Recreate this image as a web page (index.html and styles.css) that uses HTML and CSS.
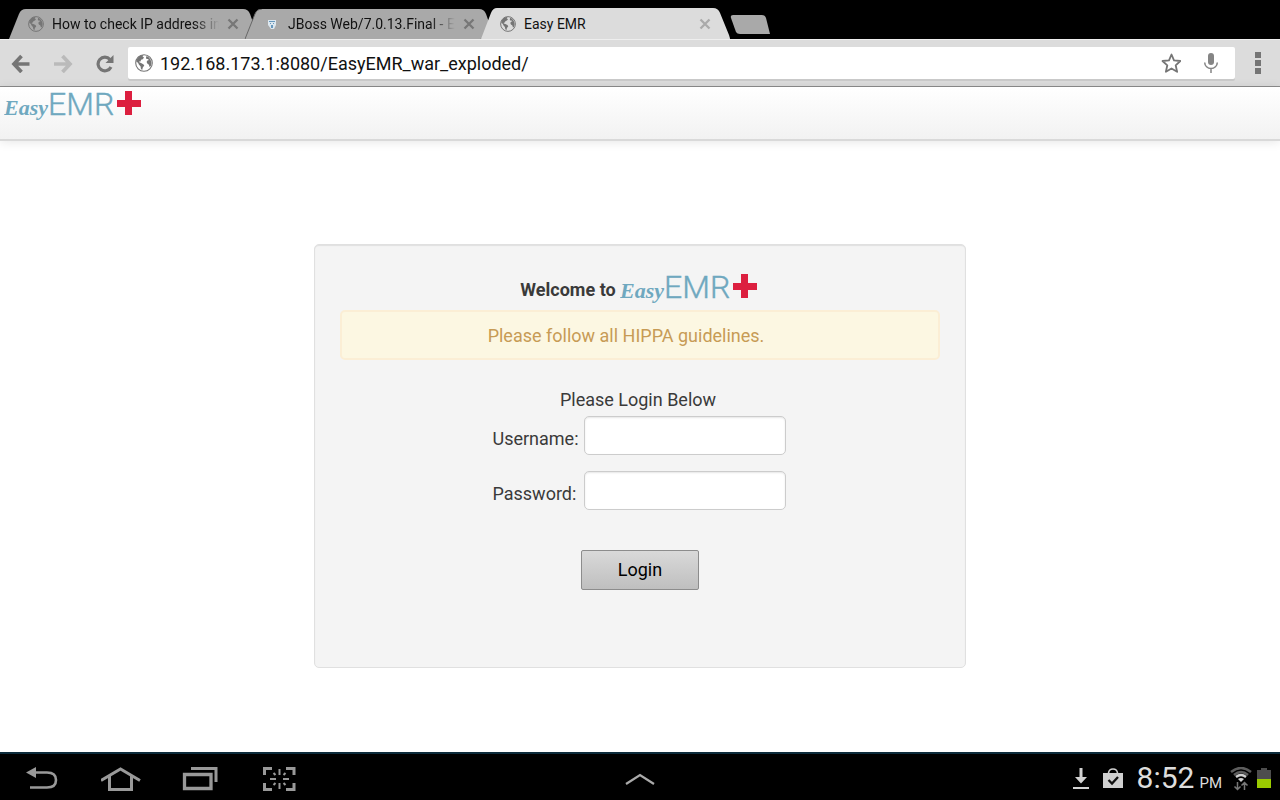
FILE: index.html
```html
<!DOCTYPE html>
<html lang="en">
<head>
<meta charset="utf-8">
<meta name="viewport" content="width=device-width, initial-scale=1">
<title>Easy EMR</title>
<link rel="stylesheet" href="styles.css">
</head>
<body>
<svg class="defs" aria-hidden="true">
  <symbol id="globe" viewBox="0 0 18 18">
    <circle cx="9" cy="9" r="8.300" fill="none" stroke="currentColor" stroke-width="1.100"/>
    <path fill="currentColor" d="M1.500 6 4 2.300 7 1 8.500 1.500 7.500 2.600 9 3.600 7.800 5.200 6 5.800 5.600 7.400 4.500 7.200 4.200 8.300 6 9 8.300 10.200 9.300 11.600 7.800 13.500 7.200 16 6 15 5.500 12.300 4 10.800 3 8.800 1.500 7.800z"/>
    <path fill="currentColor" d="M11.500 2 13.500 3 15.500 5.500 16.500 9 15.800 12 14.600 13 13.900 10.800 12.300 9.600 11.600 8 12.400 6.500 14 6 12.800 5 11.400 5.100 11 3.600z"/>
  </symbol>
  <symbol id="cross" viewBox="0 0 12 12">
    <path d="M1.500 1.500 10.500 10.500M10.500 1.500 1.500 10.500" stroke="currentColor" stroke-width="2.300" fill="none"/>
  </symbol>
  <symbol id="logo" viewBox="0 0 140 38">
    <text class="logo-script" x="0" y="27">Easy</text>
    <text class="logo-sans" x="44" y="27">EMR</text>
    <path d="M121 3h7v9h9v7h-9v8h-7v-8h-8v-7h8z" fill="#dc1f3f"/>
  </symbol>
</svg>

<div class="tabs">
  <div class="tab">
    <svg class="tab-bg" viewBox="0 0 250 30" preserveAspectRatio="none"><path class="tab-fill" d="M0 30 10 5Q12 0 17 0H235Q240 0 242 5L248 22Q245 30 236 30z"/></svg>
    <svg class="favicon"><use href="#globe"/></svg>
    <span class="tab-title fade">How to check IP address in</span>
    <button class="close" aria-label="Close tab"><svg><use href="#cross"/></svg></button>
  </div>
  <div class="tab">
    <svg class="tab-bg" viewBox="0 0 250 30" preserveAspectRatio="none"><path class="tab-fill" d="M0 30 10 5Q12 0 17 0H235Q240 0 242 5L248 22Q245 30 236 30z"/><path class="tab-edge" d="M0 30 10 5Q12 0 17 0"/></svg>
    <svg class="favicon" viewBox="0 0 16 16"><path d="M4 4h8v5l-2 4H7L4 9z" fill="#dce7ef"/><path d="M5 5h6v1H5zM6 7h1v1H6zM9 7h1v1H9zM7 9h2v3H7z" fill="#6798bd"/></svg>
    <span class="tab-title fade">JBoss Web/7.0.13.Final - E</span>
    <button class="close" aria-label="Close tab"><svg><use href="#cross"/></svg></button>
  </div>
  <div class="tab active">
    <svg class="tab-bg" viewBox="0 0 250 31" preserveAspectRatio="none"><path class="tab-fill" d="M0 31 10 5Q12 0 16 0H233Q238 0 240 5L249 27Q250 30 250 31z"/></svg>
    <svg class="favicon"><use href="#globe"/></svg>
    <span class="tab-title">Easy EMR</span>
    <button class="close" aria-label="Close tab"><svg><use href="#cross"/></svg></button>
  </div>
  <button class="new-tab" aria-label="New tab"><svg viewBox="0 0 40 20"><path d="M3 0H32Q35 0 36 3L40 19H10Q7 19 6 17L1 3Q0 0 3 0z" fill="#a9a9a9"/></svg></button>
</div>

<div class="toolbar">
  <button class="tool" aria-label="Back"><svg viewBox="0 0 20 20"><path d="M18.500 11H4M10.500 3 3 11 10.500 19" fill="none" stroke="#757575" stroke-width="3.700"/></svg></button>
  <button class="tool" aria-label="Forward"><svg viewBox="0 0 20 20"><path d="M1 11H16M9.500 3 17 11 9.500 19" fill="none" stroke="#bababa" stroke-width="3.700"/></svg></button>
  <button class="tool" aria-label="Reload"><svg viewBox="0 0 20 20"><path d="M15 6.500A6.800 6.800 0 1 0 16 14" fill="none" stroke="#757575" stroke-width="3.200"/><path d="M18.500 2V10H10.500z" fill="#757575"/></svg></button>
  <div class="omnibox">
    <svg class="site"><use href="#globe"/></svg>
    <input class="url" type="text" aria-label="Address" value="192.168.173.1:8080/EasyEMR_war_exploded/">
    <button class="tool" aria-label="Bookmark"><svg viewBox="0 0 20 20"><path d="M10.500 1.500 13 7.300 19.300 8 14.700 12.300 16.100 18.800 10.500 15.500 4.900 18.800 6.300 12.300 1.500 8 8 7.300z" fill="none" stroke="#757575" stroke-width="1.800" stroke-linejoin="round"/></svg></button>
    <button class="tool" aria-label="Voice search"><svg viewBox="0 0 20 20"><rect x="7" y="0" width="6" height="12" rx="3" fill="#858585"/><path d="M3.700 9.500A6.300 6 0 0 0 16.300 9.500M10 15v5" fill="none" stroke="#858585" stroke-width="1.500"/></svg></button>
  </div>
  <button class="tool menu" aria-label="Menu"><svg viewBox="0 0 6 22"><path d="M0 0h6v6H0zM0 8h6v6H0zM0 16h6v6H0z" fill="#757575"/></svg></button>
</div>

<main class="page">
  <header class="navbar"><a href="#" aria-label="Easy EMR home"><svg class="logo"><use href="#logo"/></svg></a></header>
  <div class="content">
    <form class="well">
      <h1 class="welcome">Welcome to <svg class="logo"><use href="#logo"/></svg></h1>
      <p class="alert">Please follow all HIPPA guidelines.</p>
      <p class="prompt">Please Login Below</p>
      <div class="fields">
        <label for="username">Username:</label><input id="username" type="text">
        <label for="password">Password:</label><input id="password" type="password">
      </div>
      <button class="login" type="submit">Login</button>
    </form>
  </div>
</main>

<footer class="system">
  <div class="keys">
    <button aria-label="Back"><svg viewBox="0 0 40 26"><path d="M12 6.500H25Q34 6.500 34 14T25 21.500H8" fill="none" stroke="#999" stroke-width="2.600"/><path d="M4 6.500 14 1V12z" fill="#999"/></svg></button>
    <button aria-label="Home"><svg viewBox="0 0 40 26"><path d="M0 14.500 19.500 3 39 14.500M8.500 10V23.500H30.500V10" fill="none" stroke="#999" stroke-width="3"/></svg></button>
    <button aria-label="Recent apps"><svg viewBox="0 0 40 26"><path d="M4.500 8.500H31V22.500H4.500z" fill="none" stroke="#999" stroke-width="3.300"/><path d="M11 2.500H36V16" fill="none" stroke="#999" stroke-width="3"/></svg></button>
    <button aria-label="Capture screen"><svg viewBox="0 0 40 26"><path d="M13 2.500H5.500V9M27 2.500H35V9M5.500 17V23.500H13M35 17V23.500H27" fill="none" stroke="#999" stroke-width="3"/><path d="M20.500 3v6M20.500 17v6M11 13h6M24 13h6M14.500 7l2 2M26.500 7l-2 2M14.500 19l2-2M26.500 19l-2-2" stroke="#999" stroke-width="2"/></svg></button>
  </div>
  <button class="expand" aria-label="Show mini apps"><svg viewBox="0 0 30 12"><path d="M1 11 15 2 29 11" fill="none" stroke="#aaa" stroke-width="2.200"/></svg></button>
  <div class="status">
    <svg class="download" viewBox="0 0 16 22"><path d="M6.500 0h3v9H14L8 15.500 2 9h4.500zM0 19h16v2H0z" fill="#d2d2d2"/></svg>
    <svg class="bag" viewBox="0 0 20 21"><path d="M0 5h20v15H0z" fill="#d0d0d0"/><path d="M5.500 5Q6 1 10 1T14.500 5" fill="none" stroke="#d0d0d0" stroke-width="1.600"/><path d="M5.500 12 9 15.500 15 9" fill="none" stroke="#111" stroke-width="2.300"/></svg>
    <time class="clock">8:52<small>PM</small></time>
    <svg class="wifi" viewBox="0 0 22 24"><path d="M1 5Q11-3 21 5M4 8Q11 2 18 8" fill="none" stroke="#5d5d5d" stroke-width="2.500"/><path d="M6 10Q11 6 16 10" fill="none" stroke="#d0d0d0" stroke-width="2.300"/><path d="M8 12Q11 10 14 12L11 15z" fill="#d0d0d0"/><path d="M7.500 15v7M4.500 19.500l3 3 3-3M14.500 23v-7M11.500 18.500l3-3 3 3" fill="none" stroke="#777" stroke-width="1.500"/></svg>
    <svg class="battery" viewBox="0 0 14 21"><path d="M4 0h6v2h4v9H0V2h4z" fill="#4d4d4d"/><path d="M0 11h14v9H0z" fill="#9acb00"/></svg>
  </div>
</footer>
</body>
</html>
```
FILE: styles.css
```css
* { box-sizing: border-box; }
body {
  margin: 0;
  min-height: 100vh;
  display: flex;
  flex-direction: column;
  background: #fff;
  color: #3a3a3a;
  font-family: Roboto, "Liberation Sans", sans-serif;
}
button {
  border: 0;
  padding: 0;
  background: none;
  font: inherit;
  color: inherit;
}
svg { display: block; }
.defs { position: absolute; width: 0; height: 0; }

.tabs {
  display: flex;
  align-items: flex-end;
  height: 39px;
  padding-left: 9px;
  background: #000;
}
.tab {
  position: relative;
  display: flex;
  align-items: center;
  width: 249px;
  height: 30px;
  padding: 0 19px;
  color: #111;
  font-size: 14px;
}
.tab + .tab { margin-left: -13px; }
.tab-bg {
  position: absolute;
  inset: 0;
  width: 100%;
  height: 100%;
}
.tab-fill { fill: #a9a9a9; }
.tab-edge { fill: none; stroke: #666; }
.active { height: 31px; }
.active .tab-fill { fill: #dcdcdc; }
.favicon {
  position: relative;
  flex: none;
  width: 16px;
  height: 16px;
  color: #757575;
}
.tab-title {
  position: relative;
  flex: 1;
  margin: 0 8px;
  overflow: hidden;
  white-space: nowrap;
}
.fade {
  -webkit-mask-image: linear-gradient(to right, #000 85%, transparent);
  mask-image: linear-gradient(to right, #000 85%, transparent);
}
.close {
  position: relative;
  flex: none;
  color: #777;
}
.active .close { color: #aaa; }
.close svg { width: 12px; height: 12px; }
.new-tab { align-self: center; margin-top: 10px; }
.new-tab svg { width: 40px; height: 20px; }

.toolbar {
  display: flex;
  align-items: center;
  height: 48px;
  padding: 0 19px 0 11px;
  gap: 22px;
  background: #dcdcdc;
  border-top: 1px solid #eee;
  border-bottom: 1px solid #8c8c8c;
}
.tool svg { width: 20px; height: 20px; }
.omnibox {
  display: flex;
  flex: 1;
  align-items: center;
  height: 32px;
  margin-left: -9px;
  padding: 0 14px 0 7px;
  gap: 20px;
  background: #fff;
  border-radius: 2px;
  box-shadow: 0 2px 0 #cacaca;
}
.site {
  flex: none;
  width: 18px;
  height: 18px;
  margin-right: -13px;
  color: #757575;
}
.url {
  flex: 1;
  min-width: 0;
  border: 0;
  padding: 0;
  background: none;
  color: #111;
  font: 18px Roboto, sans-serif;
}
.menu { margin-left: -2px; }
.menu svg { width: 6px; height: 22px; }

.page {
  display: flex;
  flex: 1;
  flex-direction: column;
}
.navbar {
  height: 54px;
  padding: 1px 4px;
  background: linear-gradient(#fff, #f2f2f2);
  border-bottom: 2px solid #d9d9d9;
  box-shadow: 0 1px 10px rgba(0, 0, 0, 0.1);
}
.logo { width: 140px; height: 38px; }
.logo-script {
  fill: #6fa8bf;
  font: italic bold 22px "Liberation Serif", serif;
}
.logo-sans {
  fill: #6fa8bf;
  stroke: #6fa8bf;
  stroke-width: 0.4px;
  font: 300 32px Roboto, sans-serif;
}
.content {
  display: flex;
  flex: 1;
  justify-content: center;
  align-items: flex-start;
  padding: 103px 20px 20px;
}
.well {
  display: flex;
  flex-direction: column;
  align-items: center;
  width: 100%;
  max-width: 652px;
  padding: 26px 25px 77px;
  background: #f4f4f4;
  border: 1px solid #e0e0e0;
  border-radius: 5px;
  box-shadow: inset 0 1px 1px rgba(0, 0, 0, 0.08);
  font-size: 18px;
  line-height: 26px;
}
.welcome {
  display: flex;
  align-items: center;
  gap: 4px;
  margin: 0;
  font-size: 18px;
  line-height: 26px;
}
.alert {
  align-self: stretch;
  margin: 1px 0 27px;
  padding: 12px 46px 10px 18px;
  background: #fcf7e2;
  border: 2px solid #fbeed5;
  border-radius: 5px;
  color: #c79b55;
  line-height: 24px;
  text-align: center;
}
.prompt { margin: 0 0 3px; padding-right: 4px; }
.fields {
  display: grid;
  grid-template-columns: auto 202px;
  align-items: center;
  column-gap: 5px;
  row-gap: 16px;
  margin-right: 2px;
}
.fields label { padding-top: 6px; }
.fields input {
  width: 100%;
  height: 39px;
  padding: 5px 8px;
  background: #fff;
  border: 1px solid #ccc;
  border-radius: 5px;
  box-shadow: inset 0 1px 2px rgba(0, 0, 0, 0.1);
  font: inherit;
}
.login {
  width: 118px;
  height: 40px;
  margin-top: 40px;
  background: linear-gradient(#d9d9d9, #bfbfbf);
  border: 1px solid #8c8c8c;
  border-radius: 2px;
  color: #000;
}

.system {
  display: grid;
  grid-template-columns: 1fr auto 1fr;
  align-items: center;
  height: 48px;
  padding: 0 9px 0 22px;
  background: #000;
  border-top: 2px solid #0c2b3b;
  color: #ddd;
}
.keys { display: flex; gap: 39px; }
.keys svg { width: 40px; height: 26px; }
.expand { margin-right: 13px; }
.expand svg { width: 30px; height: 12px; }
.status {
  display: flex;
  justify-content: flex-end;
  align-items: center;
}
.download { width: 16px; height: 22px; margin-right: 14px; }
.bag { width: 20px; height: 21px; margin-right: 14px; }
.clock { margin-right: 8px; padding-top: 4px; font-size: 30px; line-height: 40px; }
.clock small { margin-left: 5px; font-size: 15px; }
.wifi { width: 22px; height: 24px; margin-right: 5px; }
.battery { width: 14px; height: 21px; }
```
